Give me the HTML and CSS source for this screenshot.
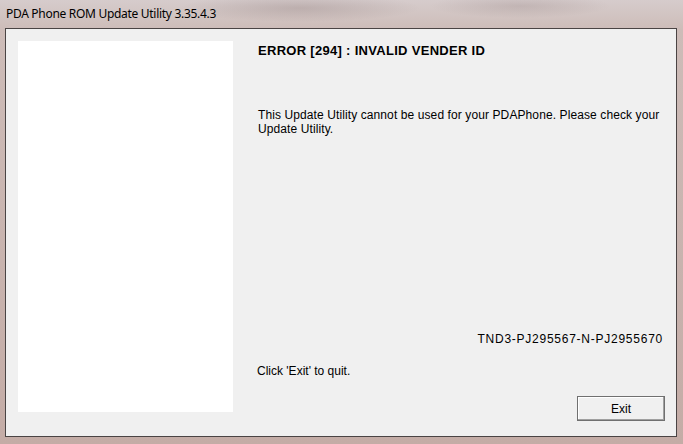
FILE: index.html
```html
<!DOCTYPE html>
<html lang="en">
<head>
    <meta charset="UTF-8">
    <title>PDA Phone ROM Update Utility 3.35.4.3</title>
    <link rel="stylesheet" href="styles.css">
</head>
<body>

<div id="window">
    <div id="titleBar">PDA Phone ROM Update Utility 3.35.4.3</div>

    <div id="client">
        <div id="sidePanel"></div>

        <div id="content">
            <h1 id="errorTitle">ERROR [294] : INVALID VENDER ID</h1>
            <p id="errorText">This Update Utility cannot be used for your PDAPhone. Please check your Update Utility.</p>

            <p id="deviceId">TND3-PJ295567-N-PJ2955670</p>
            <p id="hint">Click 'Exit' to quit.</p>

            <div id="buttonRow">
                <button type="button" id="exitButton">Exit</button>
            </div>
        </div> <!-- end content -->
    </div> <!-- end client -->
</div> <!-- end window -->

</body>
</html>
```

FILE: styles.css
```css
html, body {
    margin: 0;
    padding: 0;
}

body {
    width: 683px;
    height: 444px;
    overflow: hidden;
}

#window {
    width: 683px;
    height: 444px;
    display: flex;
    flex-direction: column;
    box-sizing: border-box;
    background:
        radial-gradient(ellipse 120px 14px at 300px 8px, rgba(120, 100, 100, 0.25), transparent),
        radial-gradient(ellipse 90px 12px at 520px 6px, rgba(120, 100, 100, 0.2), transparent),
        linear-gradient(to bottom, #d6cccc 0px, #cdbcb8 30px, #c4aca6 100%);
}

#titleBar {
    height: 28px;
    padding: 5px 0 0 6px;
    box-sizing: border-box;
    font-family: "Noto Sans", sans-serif;
    font-size: 12px;
    letter-spacing: -0.3px;
    color: #000;
}

#client {
    flex: 1;
    margin: 0 6px 7px 5px;
    border: 1px solid #4a4444;
    background-color: #f0f0f0;
    display: flex;
    padding: 12px 12px 24px 12px;
}

#sidePanel {
    width: 215px;
    background-color: #fff;
    flex-shrink: 0;
}

#content {
    flex: 1;
    display: flex;
    flex-direction: column;
    padding-left: 25px;
    font-family: "Liberation Sans", Arial, sans-serif;
    font-size: 12px;
    color: #000;
}

#errorTitle {
    margin: 2px 0 0 0;
    font-size: 13px;
    font-weight: bold;
    line-height: 15px;
    letter-spacing: 0.3px;
}

#errorText {
    margin: 50px 0 0 0;
    line-height: 14px;
    letter-spacing: 0.1px;
}

#deviceId {
    margin: auto 1px 0 0;
    text-align: right;
    line-height: 14px;
    letter-spacing: 0.75px;
}

#hint {
    margin: 18px 0 0 -1px;
    line-height: 14px;
}

#buttonRow {
    display: flex;
    justify-content: flex-end;
    margin-top: 18px;
}

#exitButton {
    width: 88px;
    height: 25px;
    margin-right: -1px;
    margin-bottom: -9px;
    font-family: "Liberation Sans", Arial, sans-serif;
    font-size: 12px;
    color: #000;
    background-color: #f0f0f0;
    border: 1px solid #707070;
    box-shadow: inset -1px -1px 0 #a0a0a0, inset 1px 1px 0 #fff;
    padding: 0;
}
```
